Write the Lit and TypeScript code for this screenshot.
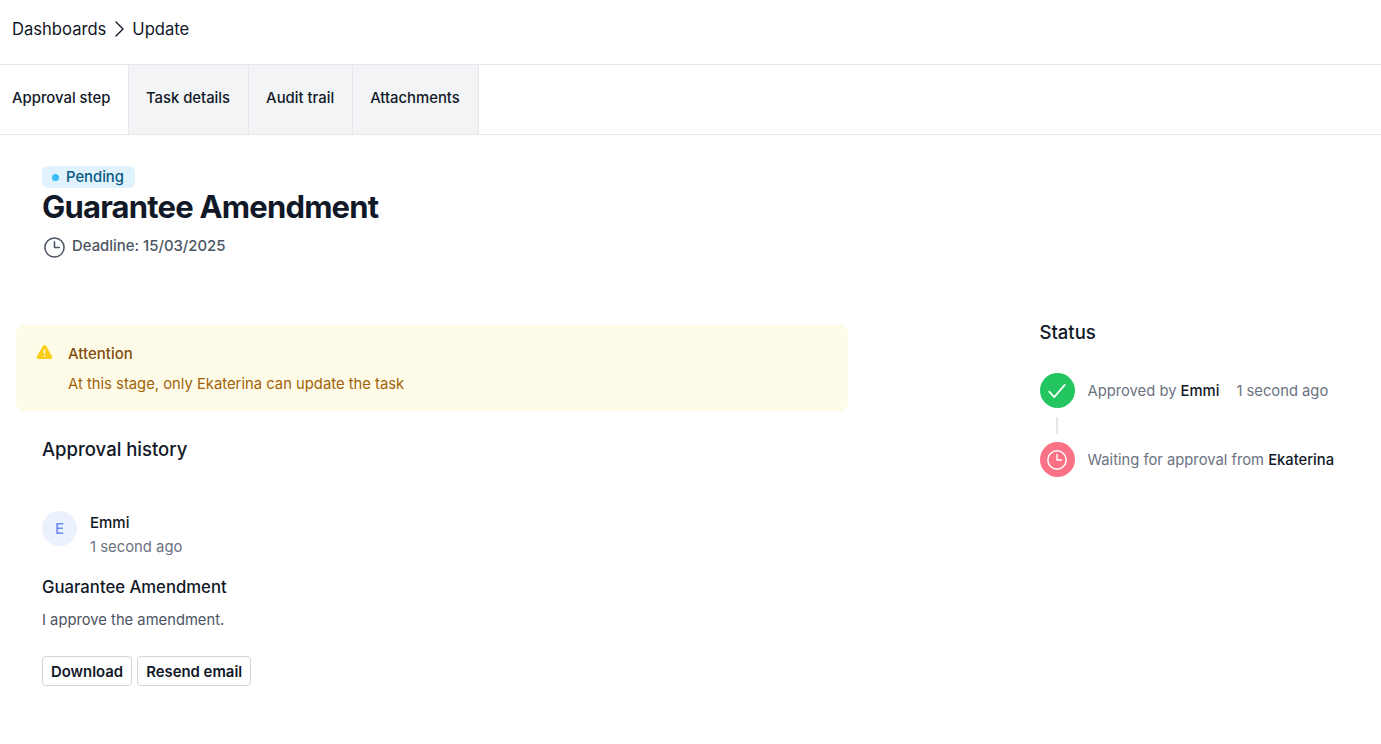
import { LitElement, html, css } from "lit";
import { customElement } from "lit/decorators.js";

@customElement("app-root")
export class AppRoot extends LitElement {
  static styles = css`
    :host { display: block; background: #fff; min-height: 744px; font-family: Inter, "Noto Sans", sans-serif; color: #111827; }
    * { box-sizing: border-box; }
    .crumbs { height: 64px; display: flex; align-items: center; gap: 5.5px; padding: 0 12px 6px; font-size: 16.6px; color: #111827; }
    .crumbs svg { width: 15px; height: 18px; display: block; }
    .tabs { display: flex; height: 71px; border-top: 1px solid #e5e7eb; border-bottom: 1px solid #e5e7eb; }
    .tab { display: flex; align-items: center; padding: 0 18px 4px 17px; font-size: 14.85px; font-weight: 500; background: #f3f4f6; border-right: 1px solid #e5e7eb; }
    .tab:last-child { padding-right: 18.5px; }
    .tab.active { background: #fff; padding: 0 17.5px 4px 12px; }
    .head { padding: 31px 42px 0; height: 190px; }
    .badge { display: inline-flex; align-items: center; gap: 7px; height: 22px; padding: 0 11px 0 10px; border-radius: 6px; background: #e0f2fe; color: #075985; font-size: 14.8px; font-weight: 500; vertical-align: top; }
    .dot { width: 7px; height: 7px; border-radius: 50%; background: #38bdf8; }
    h1 { margin: 0; font-size: 31px; line-height: 38px; font-weight: 700; letter-spacing: -0.8px; color: #111827; }
    .deadline { display: flex; align-items: flex-start; gap: 6px; margin-top: 9px; padding-left: 1px; color: #4b5563; font-size: 14.9px; font-weight: 500; }
    .deadline span { line-height: 22px; }
    .deadline svg { width: 23px; height: 23px; margin-top: 1px; }
    .main { display: flex; }
    .left { width: 832px; margin-left: 16px; }
    .alert { height: 86px; border-radius: 8px; background: #fefce8; padding: 19px 20px 0; display: flex; gap: 15px; }
    .alert svg { width: 17px; height: 17px; flex: none; }
    .alert-title { font-size: 15px; font-weight: 500; color: #854d0e; line-height: 20px; }
    .alert-text { font-size: 14.8px; color: #a16207; line-height: 20px; margin-top: 10px; }
    .history { padding: 0 26px; }
    h2 { margin: 0; font-size: 18.5px; line-height: 28px; font-weight: 500; color: #111827; }
    .history h2 { margin-top: 24px; }
    .who { display: flex; gap: 13px; margin-top: 48px; }
    .avatar { width: 35px; height: 35px; border-radius: 50%; background: #ebf2fe; color: #6b8ff0; display: flex; align-items: center; justify-content: center; font-size: 15px; font-weight: 500; }
    .name { font-size: 15px; font-weight: 500; line-height: 24px; }
    .ago { font-size: 14.85px; color: #6b7280; line-height: 24px; }
    h3 { margin: 16px 0 0; font-size: 16.7px; line-height: 24px; font-weight: 500; }
    .msg { margin: 9px 0 0; font-size: 14.75px; line-height: 24px; color: #4b5563; }
    .btns { display: flex; gap: 5px; margin-top: 24px; }
    button { height: 30px; padding: 1px 8px 0; background: #fff; border: 1px solid #d1d5db; border-radius: 4px; font: 600 14.9px Inter, sans-serif; color: #111827; }
    .right { margin-left: 191.5px; }
    .right h2 { margin-top: -7px; }
    .steps { margin-top: 27px; display: flex; flex-direction: column; }
    .step { display: flex; align-items: center; gap: 13px; font-size: 14.75px; color: #6b7280; height: 35px; }
    .step b { font-weight: 500; color: #111827; }
    .ico { width: 35px; height: 35px; border-radius: 50%; display: flex; align-items: center; justify-content: center; flex: none; }
    .ico svg { width: 22px; height: 22px; }
    .green { background: #22c55e; }
    .red { background: #fb7185; }
    .time { margin-left: 4px; }
    .line { width: 2px; height: 17px; margin: 9px 0 8px 16.5px; background: #e5e7eb; }
  `;

  render() {
    const clock = (c: string, w: string) => html`<svg viewBox="0 0 24 24" fill="none" stroke=${c} stroke-width=${w} stroke-linecap="round" stroke-linejoin="round"><circle cx="12" cy="12" r="10"></circle><path d="M12 6v6h5"></path></svg>`;
    return html`
      <nav class="crumbs">
        <span>Dashboards</span>
        <svg viewBox="0 0 15 18" fill="none" stroke="#111827" stroke-width="1.4" stroke-linecap="round" stroke-linejoin="round"><path d="M4 2l7 7-7 7"></path></svg>
        <span>Update</span>
      </nav>
      <div class="tabs">
        <div class="tab active">Approval step</div>
        <div class="tab">Task details</div>
        <div class="tab">Audit trail</div>
        <div class="tab">Attachments</div>
      </div>
      <header class="head">
        <span class="badge"><span class="dot"></span>Pending</span>
        <h1>Guarantee Amendment</h1>
        <div class="deadline">${clock("#4b5563", "1.6")}<span>Deadline: 15/03/2025</span></div>
      </header>
      <div class="main">
        <section class="left">
          <div class="alert">
            <svg viewBox="0 0 20 20"><path fill="#facc15" fill-rule="evenodd" d="M8.26 2.1c.77-1.33 2.7-1.33 3.47 0l7.22 12.5c.77 1.33-.19 3-1.73 3H2.78c-1.54 0-2.5-1.67-1.73-3L8.26 2.1zM10 6a.9.9 0 0 0-.9.9v4a.9.9 0 0 0 1.8 0v-4A.9.9 0 0 0 10 6zm0 9.3a1.1 1.1 0 1 0 0-2.2 1.1 1.1 0 0 0 0 2.2z"></path></svg>
            <div>
              <div class="alert-title">Attention</div>
              <div class="alert-text">At this stage, only Ekaterina can update the task</div>
            </div>
          </div>
          <div class="history">
            <h2>Approval history</h2>
            <div class="who">
              <div class="avatar">E</div>
              <div><div class="name">Emmi</div><div class="ago">1 second ago</div></div>
            </div>
            <h3>Guarantee Amendment</h3>
            <p class="msg">I approve the amendment.</p>
            <div class="btns"><button>Download</button><button>Resend email</button></div>
          </div>
        </section>
        <aside class="right">
          <h2>Status</h2>
          <div class="steps">
            <div class="step">
              <span class="ico green"><svg viewBox="0 0 20 20" fill="none" stroke="#fff" stroke-width="1.6" stroke-linecap="round" stroke-linejoin="round"><path d="M3 10.5l4.5 5L17 4.5"></path></svg></span>
              <span>Approved by <b>Emmi</b></span><span class="time">1 second ago</span>
            </div>
            <div class="line"></div>
            <div class="step">
              <span class="ico red">${clock("#fff", "1.6")}</span>
              <span>Waiting for approval from <b>Ekaterina</b></span>
            </div>
          </div>
        </aside>
      </div>
    `;
  }
}
